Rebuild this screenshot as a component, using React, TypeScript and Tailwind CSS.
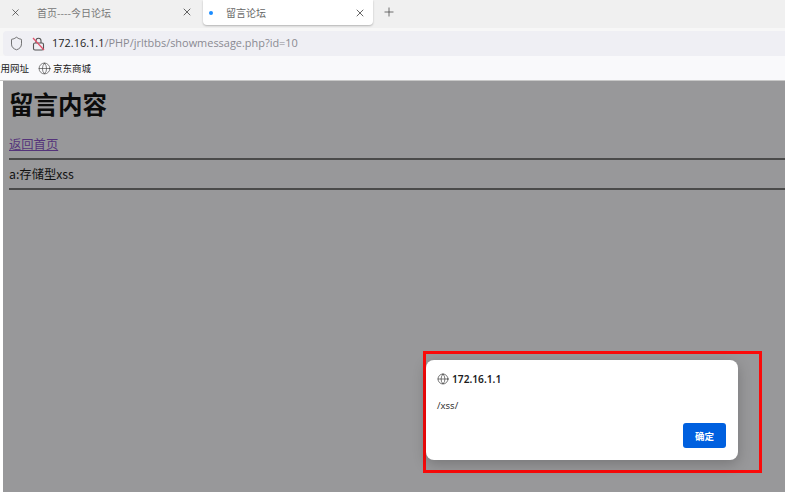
import { Globe, Plus, Shield, X } from "lucide-react";

function Tab({ title, active }: { title: string; active?: boolean }) {
  if (active) {
    return (
      <div className="flex h-[25px] w-[170px] items-center rounded-b-[4px] bg-white pl-[6px] pr-[7px] shadow-[0_1px_2px_rgba(0,0,0,0.25)]">
        <span className="h-[4px] w-[4px] rounded-full bg-[#1a8cff]" />
        <span className="ml-[13px] flex-1 text-[10px] text-[#666]">{title}</span>
        <X size={12} strokeWidth={1.5} className="text-[#333]" />
      </div>
    );
  }
  return (
    <div className="flex h-[24px] w-[190px] items-center pl-[7px]">
      <X size={11} strokeWidth={1.5} className="text-[#333]" />
      <span className="ml-[16px] flex-1 text-[10px] text-[#777]">{title}</span>
      <X size={12} strokeWidth={1.5} className="text-[#333]" />
    </div>
  );
}

function BrokenLock() {
  return (
    <svg width="13" height="14" viewBox="0 0 13 14" fill="none" className="ml-[8px]">
      <path d="M4 6V3.8a2.5 2.5 0 0 1 5 0V6" stroke="#555" strokeWidth="1.1" />
      <rect x="1.5" y="6" width="10" height="7" rx="1.5" stroke="#555" strokeWidth="1.1" />
      <path d="M1 1l11 12" stroke="#e2506a" strokeWidth="1.2" />
    </svg>
  );
}

function BrowserChrome() {
  return (
    <div className="font-['Noto_Sans_CJK_SC','Noto_Sans',sans-serif]">
      <div className="flex h-[28px] items-start bg-[#f0f0f0] pl-[3px]">
        <Tab title="首页----今日论坛" />
        <div className="ml-[10px]">
          <Tab title="留言论坛" active />
        </div>
        <Plus size={14} strokeWidth={1.3} className="ml-[9px] mt-[5px] text-[#444]" />
      </div>
      <div className="bg-[#f7f7f7] pl-[3px] pt-[3px]">
        <div className="flex h-[25px] items-center rounded-l-[4px] bg-[#efeff4] pl-[6px] font-['Open_Sans',sans-serif] text-[10.95px]">
          <Shield size={15} strokeWidth={1.3} className="text-[#555]" />
          <BrokenLock />
          <span className="ml-[7px] font-medium text-[#222]">172.16.1.1</span>
          <span className="text-[#8a8a92]">/PHP/jrltbbs/showmessage.php?id=10</span>
        </div>
      </div>
      <div className="flex h-[24px] items-center overflow-hidden bg-[#f9f9fb] text-[9.5px] text-[#222]">
        <span className="ml-[-9px]">常用网址</span>
        <Globe size={13} strokeWidth={1.1} className="ml-[9px] text-[#333]" />
        <span className="ml-[2px]">京东商城</span>
      </div>
      <div className="h-px bg-[#c8c8c8]" />
    </div>
  );
}

function AlertDialog() {
  return (
    <div className="absolute left-[423px] top-[351px] h-[122px] w-[339px] border-[3px] border-[#fb0a0a]">
      <div className="mt-[6px] flex h-[100px] w-[312px] flex-col rounded-[8px] bg-white pl-[11px] pr-[12px] font-['Noto_Sans','Noto_Sans_CJK_SC',sans-serif] shadow-[0_4px_14px_rgba(0,0,0,0.22)]">
        <div className="mt-[12px] flex items-center gap-[3px] text-[10.2px] font-semibold leading-[14px] text-[#1c1c1e]">
          <Globe size={12} strokeWidth={1.2} className="text-[#222]" />
          172.16.1.1
        </div>
        <div className="mt-[13px] text-[9.5px] text-[#333]">/xss/</div>
        <div className="mt-[10px] flex justify-end">
          <button className="h-[25px] w-[43px] rounded-[3px] bg-[#0060df] font-['Noto_Sans_CJK_SC',sans-serif] text-[9.5px] font-semibold text-white">
            确定
          </button>
        </div>
      </div>
    </div>
  );
}

export default function App() {
  return (
    <div className="relative h-[492px] w-[785px] overflow-hidden bg-white">
      <BrowserChrome />
      <div className="ml-[3px] h-[411px] bg-[#98989a] pl-[6px] font-['Noto_Sans_CJK_SC','Liberation_Sans',sans-serif] text-[12.3px] text-[#111]">
        <h1 className="pt-[4px] text-[24.5px] font-bold leading-[37px] text-[#0c0c0c]">留言内容</h1>
        <a href="#" className="mt-[12px] block leading-[20px] text-[#54337a] underline">
          返回首页
        </a>
        <hr className="mt-[4px] border-t-[2px] border-[#4a4a4a]" />
        <p className="pb-[5px] pt-[6px] leading-[17px]">a:存储型xss</p>
        <hr className="border-t-[2px] border-[#4a4a4a]" />
      </div>
      <AlertDialog />
    </div>
  );
}
